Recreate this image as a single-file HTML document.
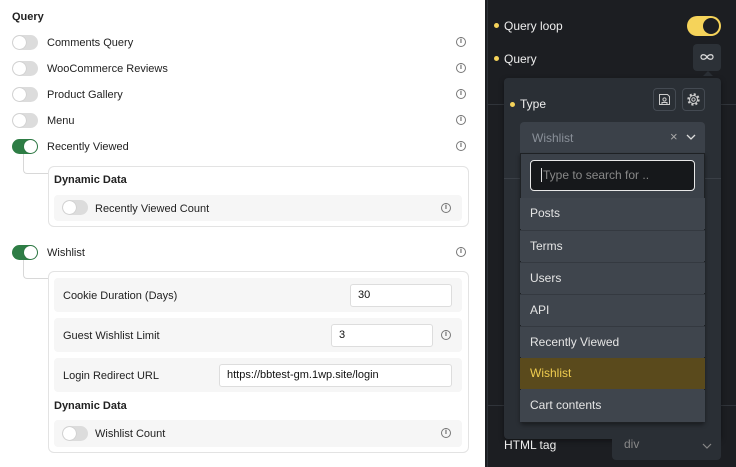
<!DOCTYPE html>
<html><head><meta charset="utf-8"><style>
*{box-sizing:border-box;margin:0;padding:0}
body{width:736px;height:467px;overflow:hidden;font-family:"Liberation Sans",sans-serif;position:relative;background:#fff}
.a{position:absolute}
.lt{font-size:11px;color:#222;margin-top:1px}
.tg{position:absolute;width:26px;height:15px;border-radius:8px;background:#dcdcdc}
.tg::after{content:"";position:absolute;left:1px;top:1px;width:13px;height:13px;border-radius:50%;background:#fff;box-shadow:0 0 1px rgba(0,0,0,.3)}
.tg.on{background:#2e7d45}
.tg.on::after{left:12px}
.inf{position:absolute;width:10px;height:10px;border:1px solid #777;border-radius:50%;font-size:7px;line-height:8px;text-align:center;color:#555;font-weight:bold}
.box{position:absolute;border:1px solid #e3e3e3;border-radius:6px;background:#fff}
.row{position:absolute;background:#f6f6f6;border-radius:4px}
.inp{position:absolute;background:#fff;border:1px solid #ddd;border-radius:3px;font-size:11px;padding:0 7px;line-height:21px;color:#111}
.conn{position:absolute;border-left:1px solid #d8d8d8;border-bottom:1px solid #d8d8d8;border-bottom-left-radius:4px}
.dk{position:absolute;left:485px;top:0;width:251px;height:467px;background:#1c1e22}
.w{color:#eee;font-size:12px}
.dot{position:absolute;width:5px;height:5px;border-radius:50%;background:#f5d35a}
.it{position:absolute;left:520px;width:185px;height:31px;background:#3f454d;color:#e5e5e5;font-size:12px;padding-left:10px;line-height:31px}
</style></head><body>
<div class="a lt" style="left:12px;top:10px;font-weight:bold">Query</div>

<div class="tg" style="left:12px;top:35px"></div><div class="a lt" style="left:47px;top:36px">Comments Query</div><div class="inf" style="left:456px;top:37px">i</div>
<div class="tg" style="left:12px;top:61px"></div><div class="a lt" style="left:47px;top:62px">WooCommerce Reviews</div><div class="inf" style="left:456px;top:63px">i</div>
<div class="tg" style="left:12px;top:87px"></div><div class="a lt" style="left:47px;top:88px">Product Gallery</div><div class="inf" style="left:456px;top:89px">i</div>
<div class="tg" style="left:12px;top:113px"></div><div class="a lt" style="left:47px;top:114px">Menu</div><div class="inf" style="left:456px;top:115px">i</div>
<div class="tg on" style="left:12px;top:139px"></div><div class="a lt" style="left:47px;top:140px">Recently Viewed</div><div class="inf" style="left:456px;top:141px">i</div>
<div class="conn" style="left:23px;top:154px;width:26px;height:20px"></div>
<div class="box" style="left:48px;top:166px;width:421px;height:61px"></div>
<div class="a lt" style="left:54px;top:173px;font-weight:bold">Dynamic Data</div>
<div class="row" style="left:54px;top:195px;width:408px;height:26px"></div>
<div class="tg" style="left:62px;top:200px"></div><div class="a lt" style="left:95px;top:202px">Recently Viewed Count</div><div class="inf" style="left:441px;top:203px">i</div>

<div class="tg on" style="left:12px;top:245px"></div><div class="a lt" style="left:47px;top:246px">Wishlist</div><div class="inf" style="left:456px;top:247px">i</div>
<div class="conn" style="left:23px;top:260px;width:26px;height:19px"></div>
<div class="box" style="left:48px;top:271px;width:421px;height:182px"></div>
<div class="row" style="left:54px;top:278px;width:408px;height:34px"></div>
<div class="a lt" style="left:63px;top:289px">Cookie Duration (Days)</div>
<div class="inp" style="left:350px;top:284px;width:102px;height:23px">30</div>
<div class="row" style="left:54px;top:318px;width:408px;height:34px"></div>
<div class="a lt" style="left:63px;top:329px">Guest Wishlist Limit</div>
<div class="inp" style="left:331px;top:324px;width:102px;height:23px">3</div><div class="inf" style="left:441px;top:330px">i</div>
<div class="row" style="left:54px;top:358px;width:408px;height:34px"></div>
<div class="a lt" style="left:63px;top:369px">Login Redirect URL</div>
<div class="inp" style="left:219px;top:364px;width:233px;height:23px">https://bbtest-gm.1wp.site/login</div>
<div class="a lt" style="left:54px;top:399px;font-weight:bold">Dynamic Data</div>
<div class="row" style="left:54px;top:420px;width:408px;height:27px"></div>
<div class="tg" style="left:62px;top:426px"></div><div class="a lt" style="left:95px;top:427px">Wishlist Count</div><div class="inf" style="left:441px;top:428px">i</div>

<div class="dk"></div>
<div class="a" style="left:487px;top:0;width:1px;height:467px;background:#2e3238"></div>
<div class="a" style="left:488px;top:104px;width:248px;height:1px;background:#30343a"></div>
<div class="a" style="left:488px;top:405px;width:248px;height:1px;background:#30343a"></div>
<div class="dot" style="left:494px;top:23px"></div><div class="a w" style="left:504px;top:19px">Query loop</div>
<div class="a" style="left:687px;top:16px;width:34px;height:20px;border-radius:10px;background:#f5d35a"></div>
<div class="a" style="left:703px;top:18px;width:16px;height:16px;border-radius:50%;background:#1c1e22"></div>
<div class="dot" style="left:494px;top:56px"></div><div class="a w" style="left:504px;top:52px">Query</div>
<div class="a" style="left:693px;top:44px;width:28px;height:27px;border-radius:4px;background:#2c3137"></div>
<svg class="a" style="left:700px;top:53px" width="14" height="8" viewBox="0 0 14 8"><path d="M7 4C5 1 1 1 1 4s4 3 6 0c2-3 6-3 6 0s-4 3-6 0" stroke="#ddd" fill="none" stroke-width="1.2"/></svg>
<div class="a" style="left:703px;top:71px;width:0;height:0;border:5px solid transparent;border-bottom-color:#2a2f35;border-top:0"></div>
<div class="a" style="left:504px;top:78px;width:217px;height:361px;border-radius:4px;background:#2a2f35;box-shadow:0 2px 6px rgba(0,0,0,.4)"></div>
<div class="a" style="left:504px;top:178px;width:217px;height:1px;background:#3a3f46"></div>
<div class="dot" style="left:510px;top:102px"></div><div class="a w" style="left:520px;top:97px">Type</div>
<div class="a" style="left:653px;top:88px;width:23px;height:23px;border:1px solid #444a52;border-radius:4px"></div>
<svg class="a" style="left:658px;top:93px" width="13" height="13" viewBox="0 0 13 13" fill="none" stroke="#ccc" stroke-width="1"><path d="M1.5 1.5h8l2 2v8h-10z"/><circle cx="6.5" cy="6.5" r="1.6"/><path d="M4 11.5v-2h5v2"/></svg>
<div class="a" style="left:682px;top:88px;width:23px;height:23px;border:1px solid #444a52;border-radius:4px"></div>
<svg class="a" style="left:686px;top:92px" width="15" height="15" viewBox="0 0 15 15"><circle cx="7.5" cy="7.5" r="5" stroke="#ccc" stroke-width="2.4" fill="none" stroke-dasharray="2 1.93"/><circle cx="7.5" cy="7.5" r="4" stroke="#ccc" stroke-width="1" fill="none"/><circle cx="7.5" cy="7.5" r="1.7" stroke="#ccc" stroke-width="1" fill="none"/></svg>
<div class="a" style="left:520px;top:122px;width:185px;height:32px;border-radius:4px 4px 0 0;background:#3b4149"></div>
<div class="a" style="left:532px;top:131px;color:#8a9099;font-size:12px">Wishlist</div>
<div class="a" style="left:670px;top:129px;color:#aaa;font-size:13px">×</div>
<svg class="a" style="left:686px;top:134px" width="10" height="6" viewBox="0 0 10 6"><path d="M1 1l4 4 4-4" stroke="#ddd" fill="none" stroke-width="1.3"/></svg>
<div class="a" style="left:520px;top:153px;width:185px;height:270px;background:#3f454d;border:1px solid #1e2124;border-radius:0 0 4px 4px;box-shadow:0 2px 4px rgba(0,0,0,.4)"></div>
<div class="a" style="left:521px;top:154px;width:183px;height:44px;background:#3b4149"></div>
<div class="a" style="left:530px;top:160px;width:165px;height:31px;border:1px solid #e8e8e8;border-radius:4px;background:#16181b;color:#888;font-size:12px;line-height:29px;padding-left:10px"><span style="border-left:1px solid #ddd;padding-left:1px">Type to search for ..</span></div>
<div class="it" style="top:198px">Posts</div>
<div class="it" style="top:230px;border-top:1px solid #343940">Terms</div>
<div class="it" style="top:262px;border-top:1px solid #343940">Users</div>
<div class="it" style="top:294px;border-top:1px solid #343940">API</div>
<div class="it" style="top:326px;border-top:1px solid #343940">Recently Viewed</div>
<div class="it" style="top:358px;background:#5a4a1c;color:#f0cd4f">Wishlist</div>
<div class="it" style="top:390px;height:32px">Cart contents</div>
<div class="a w" style="left:504px;top:438px">HTML tag</div>
<div class="a" style="left:612px;top:430px;width:109px;height:30px;background:#2a2f35;border-radius:0 0 4px 4px"></div>
<div class="a" style="left:624px;top:437px;color:#888;font-size:12px">div</div>
<svg class="a" style="left:702px;top:443px" width="10" height="6" viewBox="0 0 10 6"><path d="M1 1l4 4 4-4" stroke="#888" fill="none" stroke-width="1.2"/></svg>
</body></html>
